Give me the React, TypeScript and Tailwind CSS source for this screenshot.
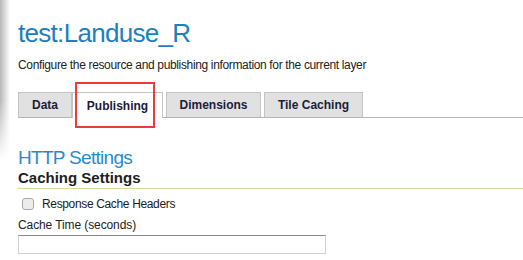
import React from 'react';

const tabs = [
  { name: 'Data', w: 'w-[54px] mr-0' },
  { name: 'Publishing', w: 'w-[91px] mr-[3px]' },
  { name: 'Dimensions', w: 'w-[95px] mr-[3px]' },
  { name: 'Tile Caching', w: 'w-[99px] mr-[3px]' },
];

const App = () => {
  const active = 'Publishing';
  return (
    <div className="relative h-[260px] w-[523px] overflow-hidden bg-white font-['Liberation_Sans',Arial,sans-serif] text-[#222]">
      {/* left panel shadow */}
      <div className="absolute left-0 top-0 h-[160px] w-[10px] bg-gradient-to-r from-[#b8b8b8] to-transparent" />
      <div className="absolute left-0 top-[100px] h-[60px] w-[12px] bg-gradient-to-b from-transparent to-white" />

      <div className="pl-[18px]">
        <h1 className="mt-[18px] h-[30px] text-[26px] leading-[30px] tracking-[-0.7px] text-[#1b80c0]">
          test:Landuse_R
        </h1>
        <p className="mt-[9px] h-[16px] text-[12px] leading-[16px] tracking-[-0.35px]">
          Configure the resource and publishing information for the current layer
        </p>

        <div className="mt-[19px] flex h-[26px] items-end border-b border-[#b5b5b5]">
          {tabs.map((t) => (
            <div
              key={t.name}
              className={
                (t.name === active
                  ? 'relative -mb-px h-[26px] bg-white '
                  : 'h-[25px] bg-[#e1e1e1] ') +
                t.w +
                ' flex items-center justify-center border border-b-0 border-[#c4c4c4] text-[12px] font-bold text-[#1c1c3c]'
              }
            >
              {t.name}
            </div>
          ))}
        </div>

        <h2 className="mt-[29px] h-[22px] text-[19px] leading-[22px] tracking-[-0.7px] text-[#2a8bcb]">
          HTTP Settings
        </h2>
        <h3 className="h-[20px] border-b border-[#c8dfa8] text-[15px] font-bold leading-[18px] text-[#1e1e1e]">
          Caching Settings
        </h3>

        <label className="mt-[8px] flex h-[14px] items-center text-[12px] tracking-[-0.35px]">
          <span className="ml-[4px] mr-[8px] inline-block h-[12px] w-[12px] rounded-[3px] border border-[#a8a8a8] bg-[#ececec]" />
          Response Cache Headers
        </label>
        <div className="mt-[6px] h-[16px] text-[12px] leading-[16px] tracking-[-0.1px]">
          Cache Time (seconds)
        </div>
        <input
          type="text"
          className="mt-[2px] block h-[19px] w-[308px] border border-[#d2d2d2] border-t-[#8a8a8a] outline-none"
        />
      </div>

      {/* highlight annotation */}
      <div className="absolute left-[75px] top-[82px] h-[46px] w-[80px] border-2 border-[#ec3b3b]" />
    </div>
  );
};

export default App;
